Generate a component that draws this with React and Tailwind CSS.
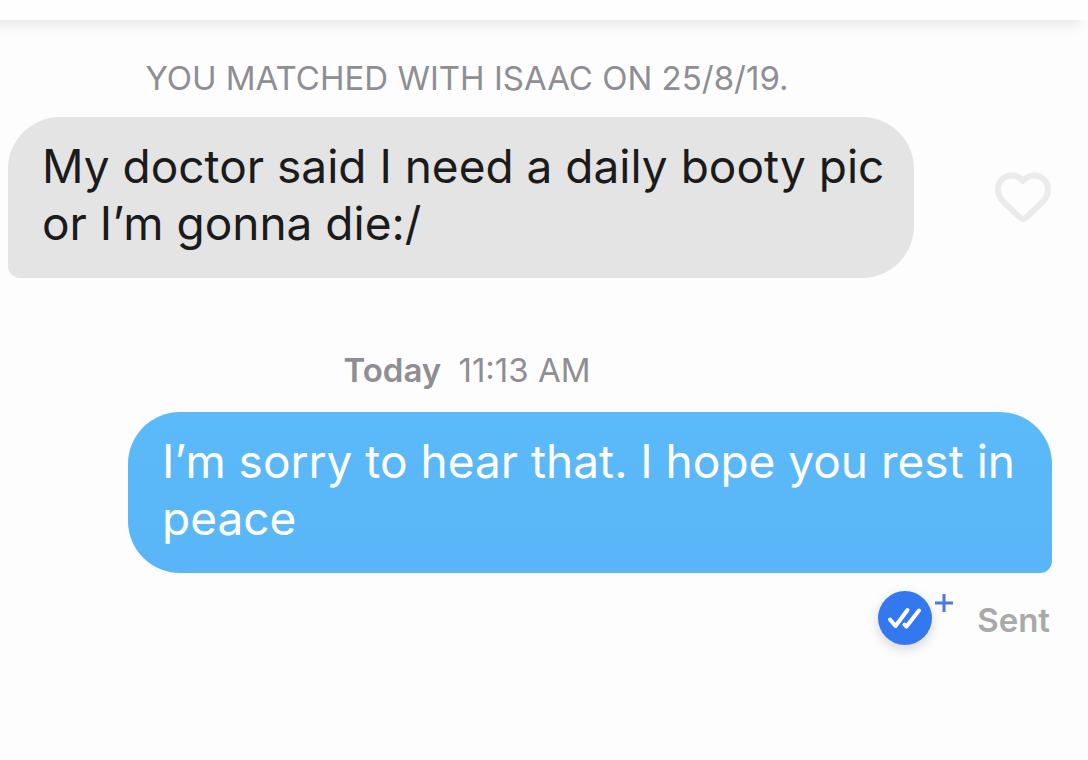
import { useState } from 'react';

const HeartIcon = ({ filled }) => (
  <svg viewBox="0 0 56 52" className="w-full" fill={filled ? '#e9e9e9' : 'none'} aria-hidden="true">
    <path
      d="M28 9 C25 5.500 21 3.500 16.500 3.500 C9 3.500 3 9 3 17.500 C3 22.500 5 26.500 8.500 30 L25.500 46 C27 47.500 29 47.500 30.500 46 L47.500 30 C51 26.500 53 22.500 53 17.500 C53 9 47 3.500 39.500 3.500 C35 3.500 31 5.500 28 9 Z"
      stroke="#ebebeb"
      strokeWidth="6"
      strokeLinejoin="round"
    />
  </svg>
);

const ReadReceiptButton = () => (
  <button type="button" aria-label="Get read receipts" className="flex items-start gap-[3px]">
    <span className="flex h-[54px] w-[54px] items-center justify-center rounded-full bg-[#3478f0] shadow-[0_4px_12px_rgba(0,0,0,0.16)]">
      <svg viewBox="0 0 54 54" className="h-full w-full" fill="none" aria-hidden="true">
        <g stroke="#fff" strokeWidth="4" strokeLinecap="round" strokeLinejoin="round">
          <path d="M12 28.500 L17.500 35 L29.500 19" />
          <path d="M26.500 33.500 L28.500 35.500 L41 19.500" />
        </g>
      </svg>
    </span>
    <svg viewBox="0 0 18 18" className="mt-[3px] h-[18px] w-[18px]" fill="none" aria-hidden="true">
      <path d="M9 0 V18 M0 9 H18" stroke="#4a76e0" strokeWidth="3" />
    </svg>
  </button>
);

const Label = ({ children, className = '' }) => (
  <p className={`pr-[154px] text-center text-[33px] leading-[40px] text-[#8e8e93] ${className}`}>
    {children}
  </p>
);

export default function App() {
  const [liked, setLiked] = useState(false);

  return (
    <div className="min-h-screen bg-[#fdfdfd] font-['Inter',sans-serif]">
      <header className="h-5 bg-[#fefefe] shadow-[-8px_5px_14px_rgba(0,0,0,0.09)]" />

      <main className="pt-[38px]">
        <Label>YOU MATCHED WITH ISAAC ON 25/8/19.</Label>

        {/* Received */}
        <div className="mt-[19px] flex items-center gap-[81px] pr-[37px] pl-2">
          <p className="flex-1 rounded-[52px] rounded-bl-[12px] bg-[#e4e4e4] pt-[21px] pr-5 pb-[26px] pl-[34px] text-[46px] leading-[57px] text-[#1b1b1b]">
            My doctor said I need a daily booty pic or I’m gonna die:/
          </p>
          <button
            type="button"
            aria-label="Like message"
            aria-pressed={liked}
            onClick={() => setLiked(!liked)}
            className="w-14 shrink-0"
          >
            <HeartIcon filled={liked} />
          </button>
        </div>

        <Label className="mt-[72px]">
          <strong className="mr-2 font-semibold">Today</strong> <time>11:13 AM</time>
        </Label>

        {/* Sent */}
        <p className="mt-[22px] mr-9 ml-32 rounded-[52px] rounded-br-[12px] bg-linear-to-b from-[#5bbaf9] to-[#59b5f7] px-[34px] pt-[21px] pb-[26px] text-[46px] leading-[57px] text-white">
          I’m sorry to hear that. I hope you rest in peace
        </p>

        <div className="mt-[18px] flex items-center justify-end gap-6 pr-[38px]">
          <ReadReceiptButton />
          <span className="pt-1 text-[33px] leading-[40px] font-semibold text-[#a9a9a9]">Sent</span>
        </div>
      </main>
    </div>
  );
}
